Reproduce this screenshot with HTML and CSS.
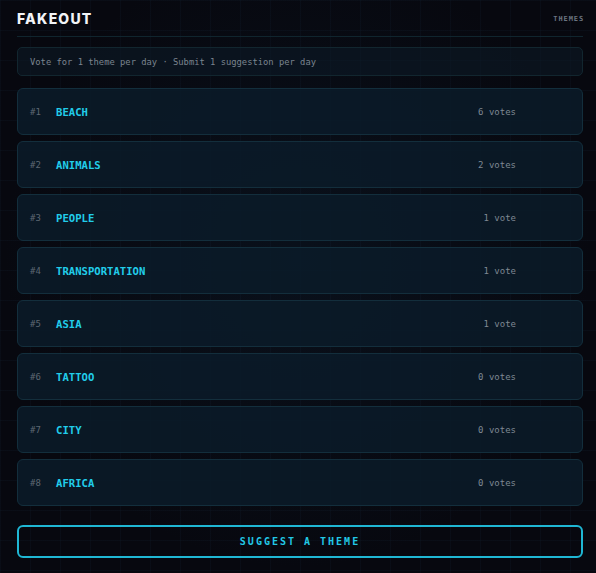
FILE: index.html
```html
<!DOCTYPE html>
<html lang="en">
<head>
<meta charset="utf-8">
<title>Fakeout · Themes</title>
<link rel="stylesheet" href="styles.css">
</head>
<body>
<div class="page">
  <header class="topbar">
    <div class="brand">FAKEOUT</div>
    <nav class="crumb">THEMES</nav>
  </header>

  <div class="notice">Vote for 1 theme per day · Submit 1 suggestion per day</div>

  <ol class="themes">
    <li class="theme"><span class="rank">#1</span><span class="name">BEACH</span><span class="votes">6 votes</span></li>
    <li class="theme"><span class="rank">#2</span><span class="name">ANIMALS</span><span class="votes">2 votes</span></li>
    <li class="theme"><span class="rank">#3</span><span class="name">PEOPLE</span><span class="votes">1 vote</span></li>
    <li class="theme"><span class="rank">#4</span><span class="name">TRANSPORTATION</span><span class="votes">1 vote</span></li>
    <li class="theme"><span class="rank">#5</span><span class="name">ASIA</span><span class="votes">1 vote</span></li>
    <li class="theme"><span class="rank">#6</span><span class="name">TATTOO</span><span class="votes">0 votes</span></li>
    <li class="theme"><span class="rank">#7</span><span class="name">CITY</span><span class="votes">0 votes</span></li>
    <li class="theme"><span class="rank">#8</span><span class="name">AFRICA</span><span class="votes">0 votes</span></li>
  </ol>

  <button class="suggest" type="button">SUGGEST A THEME</button>
</div>
</body>
</html>
```

FILE: styles.css
```css
* { box-sizing: border-box; }

html, body {
  margin: 0;
  height: 100%;
}

body {
  background-color: #07080f;
  background-image:
    radial-gradient(ellipse at 50% 45%, rgba(20, 60, 90, 0.16), rgba(0, 0, 0, 0) 70%),
    linear-gradient(rgba(40, 90, 120, 0.07) 1px, transparent 1px),
    linear-gradient(90deg, rgba(40, 90, 120, 0.07) 1px, transparent 1px);
  background-size: 100% 100%, 30px 30px, 30px 30px;
  color: #8a94a0;
  font-family: "DejaVu Sans Mono", "Liberation Mono", monospace;
}

.page {
  width: 596px;
  padding: 0 13px 0 17px;
}

.topbar {
  display: flex;
  align-items: center;
  justify-content: space-between;
  height: 37px;
  padding-top: 1px;
  border-bottom: 1px solid #10252e;
}

.brand {
  font-family: Inter, "Liberation Sans", sans-serif;
  font-weight: 800;
  font-size: 14px;
  letter-spacing: 1.2px;
  color: #f2f4f7;
}

.crumb {
  font-size: 7px;
  font-weight: bold;
  letter-spacing: 0.9px;
  color: #6b7480;
  margin-right: -1px;
}

.notice {
  margin-top: 10px;
  height: 29px;
  display: flex;
  align-items: center;
  padding-left: 12px;
  border: 1px solid #12262f;
  border-radius: 5px;
  background: rgba(12, 28, 40, 0.55);
  font-size: 8.8px;
  color: #7b848f;
}

.themes {
  list-style: none;
  margin: 12px 0 0;
  padding: 0;
  display: flex;
  flex-direction: column;
  gap: 6px;
}

.theme {
  height: 47px;
  display: flex;
  align-items: center;
  padding: 0 66px 0 12px;
  border: 1px solid #132e3c;
  border-radius: 6px;
  background: rgba(11, 27, 41, 0.85);
}

.rank {
  width: 26px;
  font-size: 9px;
  color: #5d6772;
}

.name {
  flex: 1;
  font-size: 10.6px;
  font-weight: bold;
  color: #21cdea;
}

.votes {
  font-size: 9px;
  color: #7f8893;
}

.suggest {
  display: block;
  width: 100%;
  margin-top: 19px;
  height: 33px;
  border: 2px solid #1fb7d4;
  border-radius: 6px;
  background: transparent;
  color: #22c8e6;
  font-family: "DejaVu Sans Mono", "Liberation Mono", monospace;
  font-weight: bold;
  font-size: 10px;
  letter-spacing: 2px;
  cursor: pointer;
}
```
